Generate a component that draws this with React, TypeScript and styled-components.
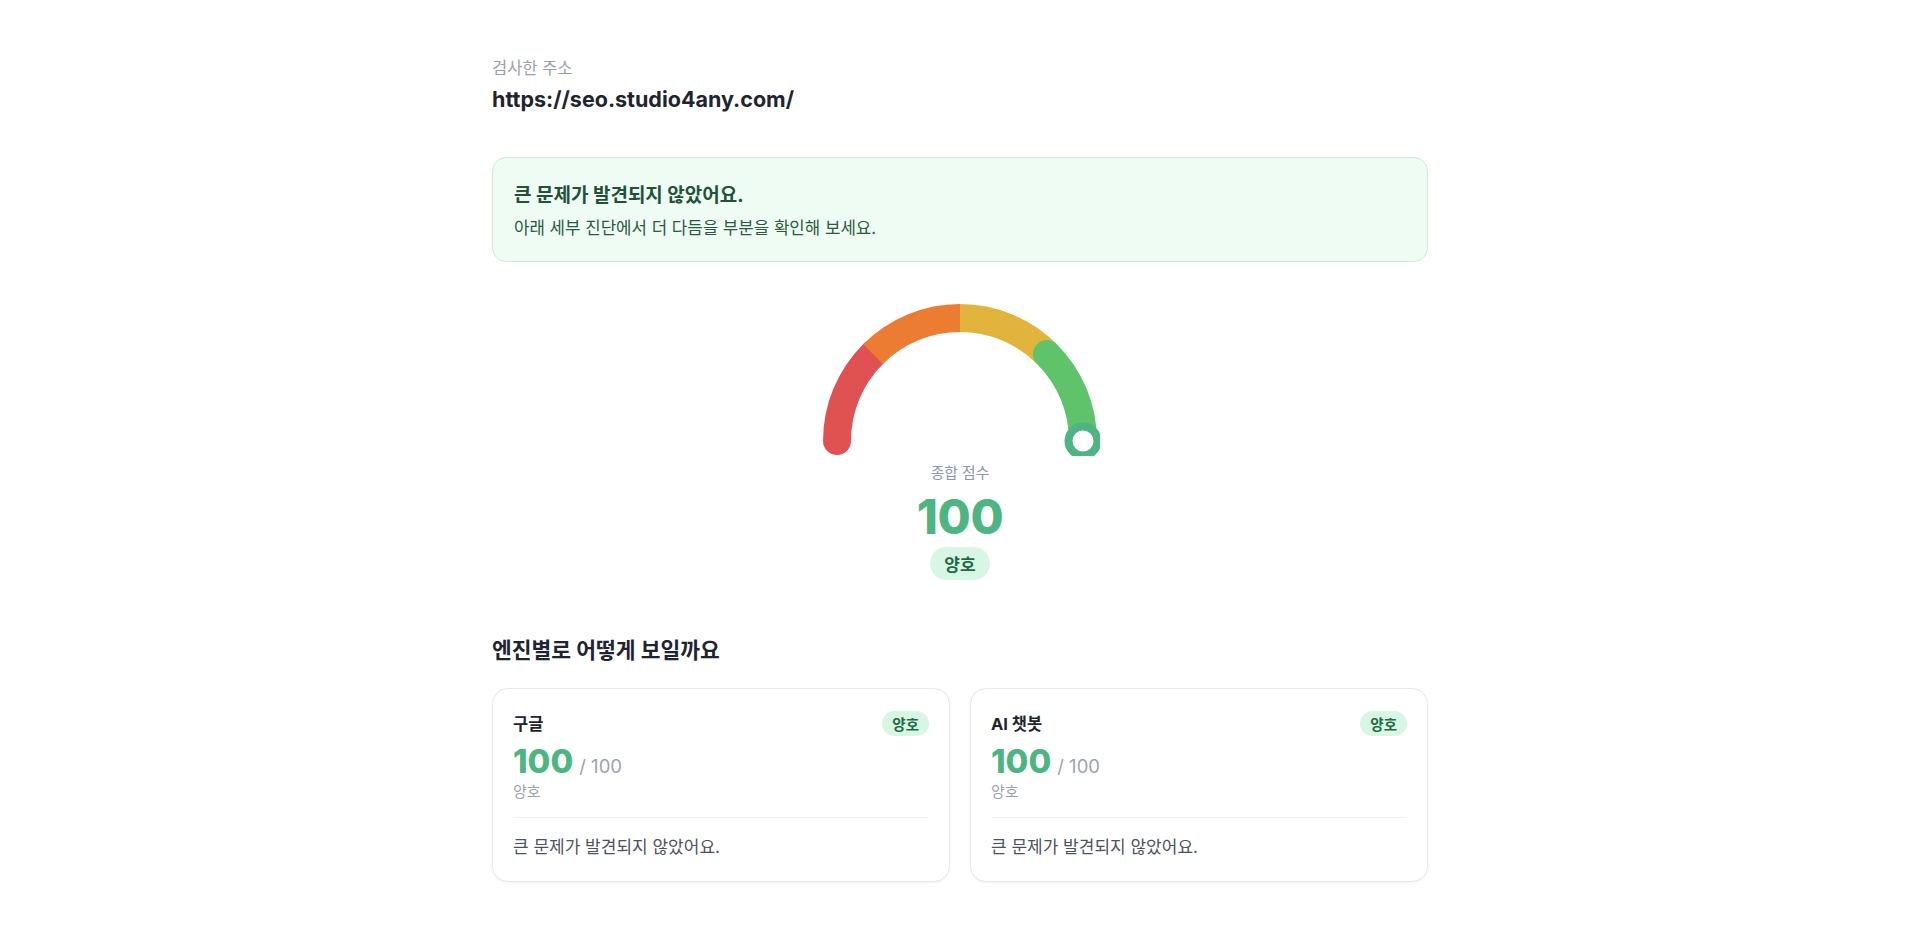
import React from 'react';
import styled, { createGlobalStyle } from 'styled-components';

const GlobalStyle = createGlobalStyle`
  html, body {
    margin: 0;
    padding: 0;
    background: #ffffff;
  }
  body {
    font-family: Inter, "Noto Sans CJK KR", "Noto Sans", sans-serif;
    color: #1e2530;
    -webkit-font-smoothing: antialiased;
  }
  * {
    box-sizing: border-box;
  }
`;

type Engine = {
  name: string;
  score: number;
  grade: string;
  summary: string;
};

const engines: Engine[] = [
  { name: '구글', score: 100, grade: '양호', summary: '큰 문제가 발견되지 않았어요.' },
  { name: 'AI 챗봇', score: 100, grade: '양호', summary: '큰 문제가 발견되지 않았어요.' },
];

// gauge geometry (viewBox units = px)
const CX = 140;
const CY = 145;
const R = 123;
const STROKE = 28;

const point = (deg: number) => {
  const rad = (deg * Math.PI) / 180;
  return { x: CX + R * Math.cos(rad), y: CY - R * Math.sin(rad) };
};

const arc = (from: number, to: number) => {
  const a = point(from);
  const b = point(to);
  return `M ${a.x.toFixed(2)} ${a.y.toFixed(2)} A ${R} ${R} 0 0 1 ${b.x.toFixed(2)} ${b.y.toFixed(2)}`;
};

const Gauge: React.FC<{ score: number }> = ({ score }) => {
  const knob = point(180 - (score / 100) * 180);
  return (
    <GaugeSvg width={280} height={160} viewBox="0 0 280 160">
      <path d={arc(180, 135)} stroke="#e05252" strokeWidth={STROKE} fill="none" strokeLinecap="round" />
      <path d={arc(135, 90)} stroke="#ec7c31" strokeWidth={STROKE} fill="none" />
      <path d={arc(90, 45)} stroke="#e3b43c" strokeWidth={STROKE} fill="none" />
      <path d={arc(45, 0)} stroke="#5ec36a" strokeWidth={STROKE} fill="none" strokeLinecap="round" />
      <circle cx={knob.x} cy={knob.y} r={14.5} fill="#ffffff" stroke="#4db581" strokeWidth={8} />
    </GaugeSvg>
  );
};

const App: React.FC = () => {
  return (
    <>
      <GlobalStyle />
      <Page>
        <Label>검사한 주소</Label>
        <Url>https://seo.studio4any.com/</Url>

        <Notice>
          <NoticeTitle>큰 문제가 발견되지 않았어요.</NoticeTitle>
          <NoticeText>아래 세부 진단에서 더 다듬을 부분을 확인해 보세요.</NoticeText>
        </Notice>

        <ScoreBlock>
          <Gauge score={100} />
          <ScoreLabel>종합 점수</ScoreLabel>
          <ScoreValue>100</ScoreValue>
          <Badge size="lg">양호</Badge>
        </ScoreBlock>

        <SectionTitle>엔진별로 어떻게 보일까요</SectionTitle>
        <CardGrid>
          {engines.map((e) => (
            <Card key={e.name}>
              <CardHead>
                <CardName>{e.name}</CardName>
                <Badge size="sm">{e.grade}</Badge>
              </CardHead>
              <CardScore>
                <strong>{e.score}</strong>
                <span>/ 100</span>
              </CardScore>
              <CardGrade>{e.grade}</CardGrade>
              <CardSummary>{e.summary}</CardSummary>
            </Card>
          ))}
        </CardGrid>
      </Page>
    </>
  );
};

const Page = styled.main`
  max-width: 960px;
  margin: 0 auto;
  padding: 57px 12px 60px;
`;

const Label = styled.div`
  font-size: 16.5px;
  line-height: 22px;
  color: #98a1b0;
`;

const Url = styled.div`
  margin-top: 6px;
  font-size: 21.5px;
  line-height: 28px;
  font-weight: 700;
  color: #1e2530;
`;

const Notice = styled.div`
  margin-top: 44px;
  padding: 24px 21px 21px;
  background: #eefcf4;
  border: 1.5px solid #c6efd6;
  border-radius: 14px;
`;

const NoticeTitle = styled.div`
  font-size: 19px;
  line-height: 28px;
  font-weight: 700;
  color: #1f5236;
`;

const NoticeText = styled.div`
  margin-top: 6px;
  font-size: 16.8px;
  line-height: 24px;
  color: #2c5a40;
`;

const ScoreBlock = styled.section`
  margin-top: 34px;
  display: flex;
  flex-direction: column;
  align-items: center;
`;

const GaugeSvg = styled.svg`
  display: block;
  overflow: hidden;
`;

const ScoreLabel = styled.div`
  margin-top: 7px;
  font-size: 14.8px;
  line-height: 20px;
  color: #8c96a8;
`;

const ScoreValue = styled.div`
  margin-top: 8px;
  font-size: 48px;
  line-height: 52px;
  font-weight: 800;
  letter-spacing: -0.3px;
  color: #4db581;
`;

const Badge = styled.span<{ size: 'sm' | 'lg' }>`
  display: inline-flex;
  align-items: center;
  justify-content: center;
  border-radius: 999px;
  background: #d7f6e4;
  color: #1d6a45;
  font-weight: 700;
  height: ${(p) => (p.size === 'lg' ? '33px' : '25px')};
  padding: ${(p) => (p.size === 'lg' ? '0 14px' : '0 10px')};
  font-size: ${(p) => (p.size === 'lg' ? '17px' : '14.5px')};
  margin-top: ${(p) => (p.size === 'lg' ? '4px' : '0')};
`;

const SectionTitle = styled.h2`
  margin: 55px 0 0;
  font-size: 21.5px;
  line-height: 30px;
  font-weight: 700;
  color: #1e2530;
`;

const CardGrid = styled.div`
  margin-top: 23px;
  display: grid;
  grid-template-columns: 1fr 1fr;
  gap: 20px;
`;

const Card = styled.div`
  padding: 22px 20px 22px;
  border: 1.5px solid #e6e8ec;
  border-radius: 16px;
  background: #ffffff;
  box-shadow: 0 1px 3px rgba(15, 23, 42, 0.05);
`;

const CardHead = styled.div`
  display: flex;
  align-items: center;
  justify-content: space-between;
`;

const CardName = styled.div`
  font-size: 16.5px;
  line-height: 24px;
  font-weight: 700;
  color: #1e2530;
`;

const CardScore = styled.div`
  margin-top: 5px;
  display: flex;
  align-items: baseline;
  gap: 6px;

  strong {
    font-size: 33px;
    line-height: 40px;
    font-weight: 800;
    color: #4db581;
  }
  span {
    font-size: 18.5px;
    color: #9ba3b0;
  }
`;

const CardGrade = styled.div`
  margin-top: 1px;
  font-size: 15px;
  line-height: 20px;
  color: #9ba3b0;
`;

const CardSummary = styled.div`
  margin-top: 15px;
  padding-top: 17px;
  border-top: 1px solid #eef0f3;
  font-size: 17px;
  line-height: 24px;
  color: #4b5362;
`;

export default App;
